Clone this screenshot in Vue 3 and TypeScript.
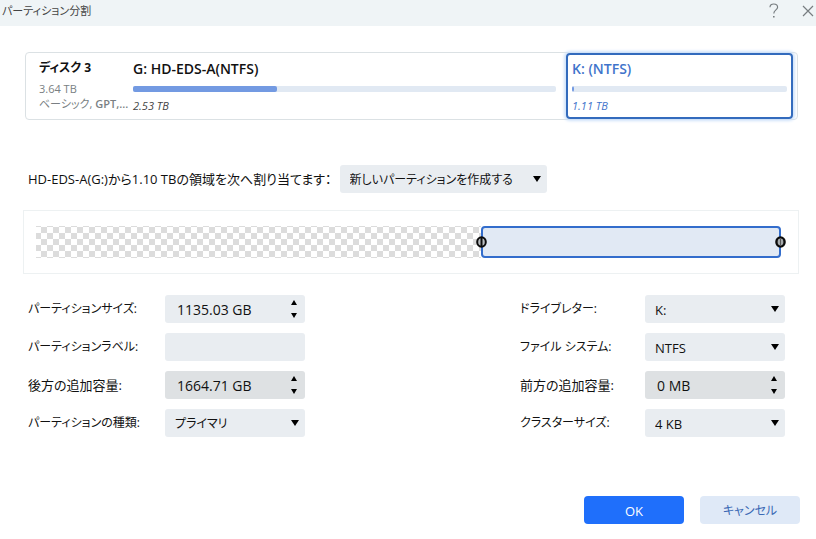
<script setup lang="ts">
import { ref } from 'vue'

interface Field {
  id: string
  label: string
  kind: 'spin' | 'text' | 'select'
  value: string
  disabled?: boolean
}

const target = ref('新しいパーティションを作成する')

const leftFields = ref<Field[]>([
  { id: 'size', label: 'パーティションサイズ:', kind: 'spin', value: '1135.03 GB' },
  { id: 'label', label: 'パーティションラベル:', kind: 'text', value: '' },
  { id: 'after', label: '後方の追加容量:', kind: 'spin', value: '1664.71 GB', disabled: true },
  { id: 'type', label: 'パーティションの種類:', kind: 'select', value: 'プライマリ' },
])

const rightFields = ref<Field[]>([
  { id: 'letter', label: 'ドライブレター:', kind: 'select', value: 'K:' },
  { id: 'fs', label: 'ファイル システム:', kind: 'select', value: 'NTFS' },
  { id: 'before', label: '前方の追加容量:', kind: 'spin', value: '0 MB', disabled: true },
  { id: 'cluster', label: 'クラスターサイズ:', kind: 'select', value: '4 KB' },
])

const isKana = (text: string): boolean => /^[ァ-ヶ]/.test(text)
</script>

<template>
  <div class="dialog">
    <header class="titlebar">
      <h1>パーティション分割</h1>
      <div class="window-buttons">
        <button type="button" aria-label="ヘルプ">
          <svg width="10" height="16" viewBox="0 0 10 16" fill="none" stroke="#777d80" stroke-width="1.2">
            <path d="M1 4.2C1 2 2.6 1 4.7 1S8.6 2.2 8.6 4.2C8.6 7 4.8 6.8 4.8 10.6" />
            <path d="M4.8 13v1.6" stroke-width="1.6" />
          </svg>
        </button>
        <button type="button" aria-label="閉じる">
          <svg width="12" height="12" viewBox="0 0 12 12" fill="none" stroke="#777d80" stroke-width="1.2">
            <path d="M1 1l10 10M11 1L1 11" />
          </svg>
        </button>
      </div>
    </header>

    <main class="content">
      <section class="disk">
        <div class="disk-info">
          <strong>ディスク 3</strong>
          <span>3.64 TB</span>
          <span class="kind">ベーシック, <b>GPT,...</b></span>
        </div>
        <div class="volume">
          <strong>G: HD-EDS-A(NTFS)</strong>
          <div class="usage"><div class="used" :style="{ width: '34%' }"></div></div>
          <em>2.53 TB</em>
        </div>
        <div class="volume selected">
          <strong>K: (NTFS)</strong>
          <div class="usage"><div class="used" :style="{ width: '1%' }"></div></div>
          <em>1.11 TB</em>
        </div>
      </section>

      <div class="allocate">
        <label for="target">HD-EDS-A(G:)から1.10 TBの領域を次へ割り当てます：</label>
        <div class="control target">
          <select id="target" v-model="target" class="kana">
            <option>新しいパーティションを作成する</option>
          </select>
          <svg class="arrow" width="8" height="6" viewBox="0 0 8 6"><path d="M0 0h8L4 6z" /></svg>
        </div>
      </div>

      <section class="map">
        <div class="space"></div>
        <div class="part">
          <svg class="handle start" width="11" height="12" viewBox="0 0 11 12">
            <ellipse cx="5.5" cy="6" rx="4.3" ry="4.8" fill="#b9bdc0" stroke="#0b0b0b" stroke-width="2" />
            <path d="M5.5 1v10" stroke="#0b0b0b" stroke-width="2" />
          </svg>
          <svg class="handle end" width="11" height="12" viewBox="0 0 11 12">
            <ellipse cx="5.5" cy="6" rx="4.1" ry="4.6" fill="#a7abad" stroke="#0b0b0b" stroke-width="2.4" />
            <path d="M5.5 2v8" stroke="#5a5a5a" stroke-width="1" />
          </svg>
        </div>
      </section>

      <form class="fields" @submit.prevent>
        <div v-for="(column, i) in [leftFields, rightFields]" :key="i" class="column" :class="{ right: i === 1 }">
          <template v-for="field in column" :key="field.id">
            <label :for="field.id" :class="{ kana: isKana(field.label) }">{{ field.label }}</label>
            <div class="control" :class="[field.kind, { disabled: field.disabled }]">
              <select
                v-if="field.kind === 'select'"
                :id="field.id"
                v-model="field.value"
                :class="{ kana: isKana(field.value) }"
              >
                <option>{{ field.value }}</option>
              </select>
              <input v-else :id="field.id" v-model="field.value" type="text" :disabled="field.disabled" />
              <svg v-if="field.kind === 'select'" class="arrow" width="8" height="6" viewBox="0 0 8 6">
                <path d="M0 0h8L4 6z" />
              </svg>
              <div v-if="field.kind === 'spin'" class="steps">
                <button type="button" aria-label="増やす" :disabled="field.disabled">
                  <svg width="6" height="5" viewBox="0 0 6 5"><path d="M0 5h6L3 0z" /></svg>
                </button>
                <button type="button" aria-label="減らす" :disabled="field.disabled">
                  <svg width="6" height="5" viewBox="0 0 6 5"><path d="M0 0h6L3 5z" /></svg>
                </button>
              </div>
            </div>
          </template>
        </div>
      </form>
    </main>

    <footer class="actions">
      <button type="button" class="primary">OK</button>
      <button type="button" class="secondary">キャンセル</button>
    </footer>
  </div>
</template>

<style>
body {
  margin: 0;
  background: #fff;
}
</style>

<style scoped>
.dialog {
  display: flex;
  flex-direction: column;
  min-height: 100vh;
  box-sizing: border-box;
  padding-bottom: 15px;
  font-family: "Open Sans", "Noto Sans CJK JP", sans-serif;
  font-size: 13px;
  line-height: 20px;
  font-feature-settings: "palt";
  color: #111;
  background: #fff;
}

button,
input,
select {
  font: inherit;
  font-feature-settings: inherit;
  color: inherit;
  border: 0;
  margin: 0;
  padding: 0;
  background: none;
}

svg {
  display: block;
}

.titlebar {
  display: flex;
  align-items: center;
  justify-content: space-between;
  height: 26px;
  padding: 0 2px;
  background: #eff4f6;
}

.titlebar h1 {
  margin: 0;
  padding-bottom: 5px;
  font-size: 11px;
  font-weight: 400;
  color: #444;
}

.window-buttons {
  display: flex;
  align-items: center;
  gap: 23px;
  padding-bottom: 4px;
}

.content {
  flex: 1;
  padding: 26px 18px 0 24px;
}

.disk {
  display: grid;
  grid-template-columns: 84px 423fr 227fr;
  column-gap: 10px;
  box-sizing: border-box;
  height: 68px;
  padding: 0 4px 0 13px;
  margin-left: 1px;
  border: 1px solid #dbe1e4;
  border-radius: 4px;
}

.disk-info {
  display: flex;
  flex-direction: column;
  padding-top: 5px;
  font-size: 11px;
  line-height: 15px;
  color: #7a7f83;
}

.disk-info strong {
  font-size: 12px;
  line-height: 20px;
  margin-bottom: 3px;
  color: #111;
}

.disk-info .kind {
  white-space: nowrap;
}

.disk-info b {
  font-weight: 600;
}

.volume {
  padding: 6px 0 0;
}

.volume strong {
  display: block;
  font-size: 14px;
  font-weight: 600;
}

.volume em {
  display: block;
  margin-top: 4px;
  font-size: 11px;
  color: #444;
}

.usage {
  height: 6px;
  margin-top: 7px;
  border-radius: 2px;
  overflow: hidden;
  background: #e1e9f3;
}

.used {
  height: 100%;
  border-radius: 0 2px 2px 0;
  background: #739ae2;
}

.selected {
  box-sizing: border-box;
  padding: 4px 4px 0;
  border: 2px solid #336bbd;
  border-radius: 4px;
  box-shadow: 0 0 3px 2px #cfe2fa;
}

.selected strong,
.selected em {
  color: #3f74cb;
}

.allocate {
  display: flex;
  align-items: center;
  gap: 8px;
  margin-top: 45px;
  padding-left: 4px;
}

.control {
  position: relative;
  display: flex;
  height: 28px;
  width: 140px;
  border-radius: 3px;
  background: #e9edf1;
}

.control.target {
  width: 207px;
}

.control.disabled {
  background: #dee1e3;
}

.control select,
.control input {
  flex: 1;
  min-width: 0;
  appearance: none;
  padding: 2px 10px 0;
  outline: 0;
}

.control input {
  font-size: 14px;
}

.control.spin input {
  padding-left: 12px;
}

label.kana,
.control .kana {
  font-size: 12px;
}

.arrow {
  position: absolute;
  right: 6px;
  top: 11px;
  pointer-events: none;
}

.steps {
  display: flex;
  flex-direction: column;
  justify-content: center;
  gap: 8px;
  padding-right: 8px;
}

.map {
  display: grid;
  grid-template-columns: 445fr 300fr;
  margin: 17px -1px 0;
  padding: 15px 17px 15px 12px;
  border: 1px solid #edf1f2;
}

.space {
  height: 32px;
  background: conic-gradient(#dcdcdc 25%, #fff 0 50%, #dcdcdc 0 75%, #fff 0) -1px 1px / 12px 12px;
}

.part {
  position: relative;
  box-sizing: border-box;
  height: 32px;
  border: 2px solid #336dcc;
  border-radius: 4px;
  background: #e1e9f4;
}

.handle {
  position: absolute;
  top: 8px;
}

.handle.start {
  left: -7px;
}

.handle.end {
  right: -7px;
}

.fields {
  display: flex;
  justify-content: space-between;
  margin-top: 21px;
  padding: 0 13px 0 4px;
}

.column {
  display: grid;
  grid-template-columns: 137px 140px;
  row-gap: 10px;
  align-items: center;
}

.column.right {
  grid-template-columns: 125px 140px;
}

.actions {
  display: flex;
  justify-content: flex-end;
  gap: 16px;
  padding-right: 16px;
}

.actions button {
  width: 100px;
  height: 28px;
  padding-top: 2px;
  border-radius: 4px;
}

.actions .primary {
  color: #fff;
  background: #1f6ffb;
}

.actions .secondary {
  font-size: 12px;
  color: #3a68b4;
  background: #dfe9f7;
}
</style>
